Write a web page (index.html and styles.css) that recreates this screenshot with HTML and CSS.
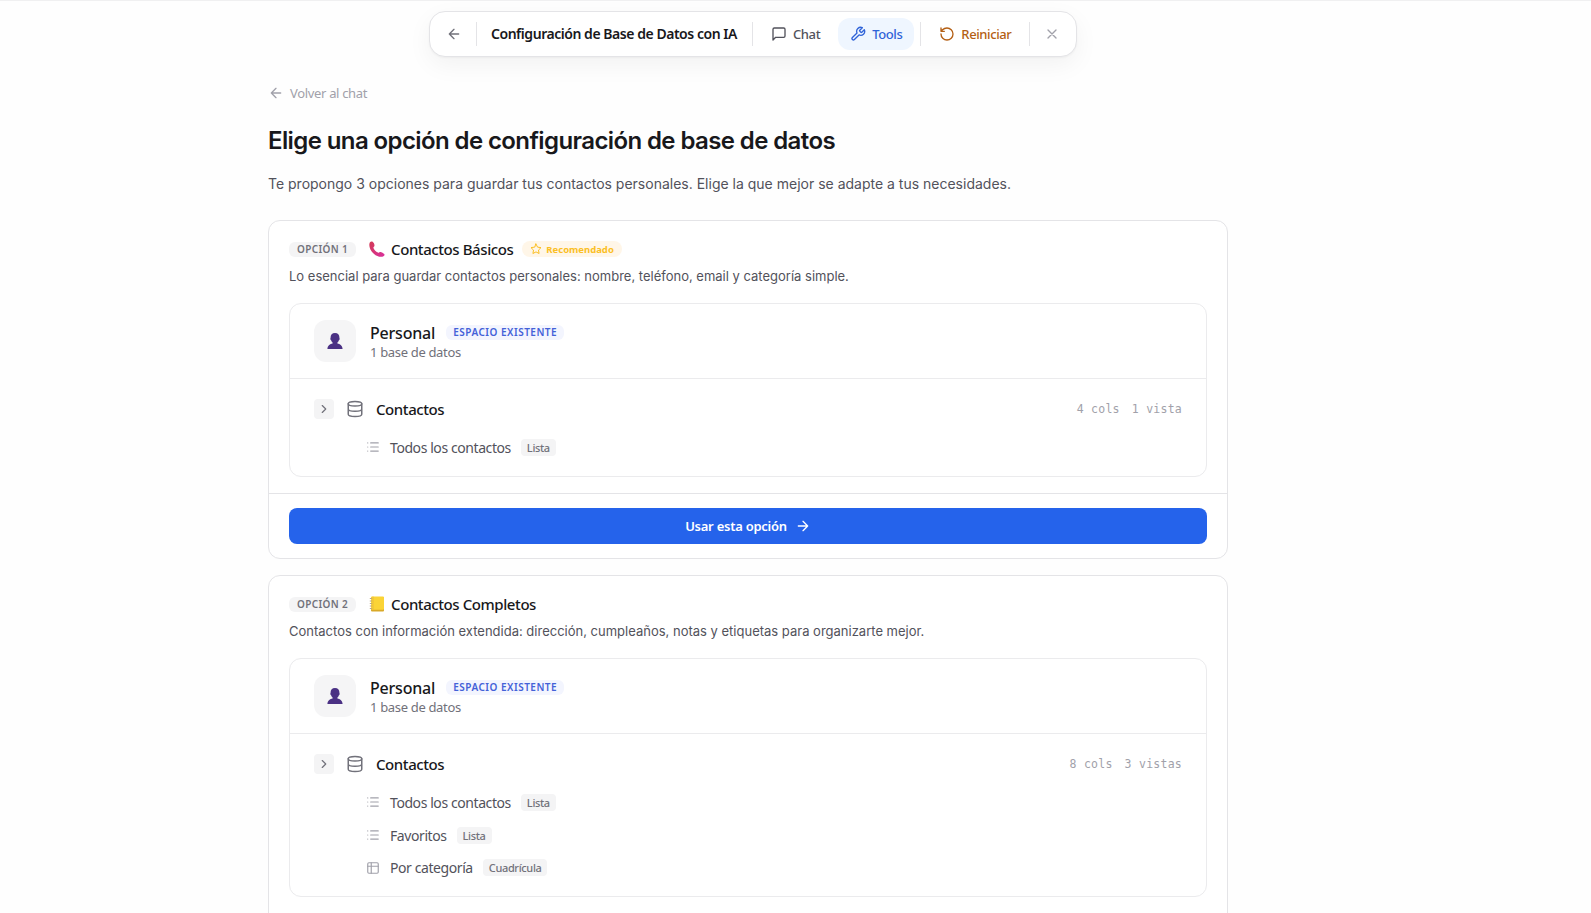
FILE: index.html
```html
<!DOCTYPE html>
<html lang="es">
    <head>
        <meta charset="utf-8">
        <title>Configuración de Base de Datos con IA</title>
        <link rel="stylesheet" href="styles.css">
    </head>
    <body>
        <!-- shared icons -->
        <svg class="sprite">
            <symbol id="arrow-left" viewBox="0 0 24 24"><path d="m12 19-7-7 7-7M19 12H5"/></symbol>
            <symbol id="arrow-right" viewBox="0 0 24 24"><path d="M5 12h14M12 5l7 7-7 7"/></symbol>
            <symbol id="chevron" viewBox="0 0 24 24"><path d="m9 18 6-6-6-6"/></symbol>
            <symbol id="database" viewBox="0 0 24 24"><ellipse cx="12" cy="5" rx="9" ry="3"/><path d="M3 5v14a9 3 0 0 0 18 0V5M3 12a9 3 0 0 0 18 0"/></symbol>
            <symbol id="list" viewBox="0 0 24 24"><path d="M8 5h13M8 12h13M8 19h13M3 5h.01M3 12h.01M3 19h.01"/></symbol>
            <symbol id="grid" viewBox="0 0 24 24"><rect x="3" y="3" width="18" height="18" rx="2"/><path d="M3 9h18M9 3v18"/></symbol>
            <symbol id="user" viewBox="0 0 16 16"><path d="M8 0c2.900 0 4.500 1.800 4.400 4.600 0 .7.4.8.2 1.700-.2.7-.6.8-.8 1.300-.3.9-.8 1.500-1.400 2v1c2.500.7 4.800 1.600 5.200 5.400H.4c.4-3.800 2.700-4.700 5.200-5.400v-1c-.6-.5-1.100-1.100-1.400-2-.2-.5-.6-.6-.8-1.300-.2-.9.2-1 .2-1.700C3.500 1.800 5.100 0 8 0z"/></symbol>
        </svg>

        <nav class="toolbar">
            <button class="icon-btn"><svg class="icon"><use href="#arrow-left"/></svg></button>
            <span class="divider"></span>
            <span class="toolbar-title">Configuración de Base de Datos con IA</span>
            <span class="divider"></span>
            <button class="tab">
                <svg class="icon" viewBox="0 0 24 24"><path d="M21 15a2 2 0 0 1-2 2H7l-4 4V5a2 2 0 0 1 2-2h14a2 2 0 0 1 2 2z"/></svg>
                <span>Chat</span>
            </button>
            <button class="tab active">
                <svg class="icon" viewBox="0 0 24 24"><path d="M14.700 6.300a1 1 0 0 0 0 1.400l1.600 1.600a1 1 0 0 0 1.400 0l3.770-3.770a6 6 0 0 1-7.940 7.940l-6.910 6.910a2.120 2.120 0 0 1-3-3l6.910-6.910a6 6 0 0 1 7.940-7.940l-3.760 3.760z"/></svg>
                <span>Tools</span>
            </button>
            <span class="divider"></span>
            <button class="tab reset">
                <svg class="icon" viewBox="0 0 24 24"><path d="M3 12a9 9 0 1 0 9-9 9.750 9.750 0 0 0-6.740 2.740L3 8M3 3v5h5"/></svg>
                <span>Reiniciar</span>
            </button>
            <span class="divider"></span>
            <button class="icon-btn close"><svg class="icon" viewBox="0 0 24 24"><path d="M18 6 6 18M6 6l12 12"/></svg></button>
        </nav>

        <main class="content">
            <a class="back"><svg class="icon"><use href="#arrow-left"/></svg><span>Volver al chat</span></a>
            <h1>Elige una opción de configuración de base de datos</h1>
            <p class="intro">Te propongo 3 opciones para guardar tus contactos personales. Elige la que mejor se adapte a tus necesidades.</p>

            <section class="option">
                <div class="option-body">
                    <div class="option-head">
                        <span class="option-num">OPCIÓN 1</span>
                        <svg class="emoji" viewBox="0 0 16 16">
                            <defs><linearGradient id="phone" x1="0" y1="0" x2="1" y2="1"><stop offset="0" stop-color="#d33a55"/><stop offset="1" stop-color="#d9309c"/></linearGradient></defs>
                            <path fill="url(#phone)" d="M.8 1.500C1.600.5 2.800.3 3.600.8c1 .8 1.900 2.300 1.900 3.600 0 1-1.200 1.400-1.100 2.300.2 1.500 2.600 4.200 4.500 4.900.9.3 1.500-.8 2.500-.7 1.300.2 3.100 1.100 3.900 2.200.6 1-.1 2-1.200 2.400-3 1-7.200-.3-10.100-3.400C1.100 9.200-.6 4.400.8 1.500z"/>
                        </svg>
                        <h2>Contactos Básicos</h2>
                        <span class="recommended">
                            <svg class="icon" viewBox="0 0 24 24"><path d="m12 2 3.090 6.260L22 9.270l-5 4.870 1.180 6.880L12 17.770l-6.180 3.250L7 14.140 2 9.270l6.910-1.010z"/></svg>
                            <span>Recomendado</span>
                        </span>
                    </div>
                    <p class="option-desc">Lo esencial para guardar contactos personales: nombre, teléfono, email y categoría simple.</p>
                    <div class="space">
                        <div class="space-head">
                            <span class="avatar"><svg><use href="#user"/></svg></span>
                            <div class="space-info">
                                <div class="space-name"><h3>Personal</h3><span class="existing">ESPACIO EXISTENTE</span></div>
                                <p>1 base de datos</p>
                            </div>
                        </div>
                        <div class="space-body">
                            <div class="db">
                                <button class="expand"><svg class="icon"><use href="#chevron"/></svg></button>
                                <svg class="icon db-icon"><use href="#database"/></svg>
                                <h4>Contactos</h4>
                                <div class="meta"><span>4 cols</span><span>1 vista</span></div>
                            </div>
                            <ul class="views">
                                <li><svg class="icon"><use href="#list"/></svg><span>Todos los contactos</span><span class="type">Lista</span></li>
                            </ul>
                        </div>
                    </div>
                </div>
                <div class="option-foot">
                    <button class="use-btn"><span>Usar esta opción</span><svg class="icon"><use href="#arrow-right"/></svg></button>
                </div>
            </section>

            <section class="option">
                <div class="option-body">
                    <div class="option-head">
                        <span class="option-num">OPCIÓN 2</span>
                        <svg class="emoji" viewBox="0 0 16 16">
                            <rect x="2" y="1" width="13" height="14.500" rx="1" fill="#d9a928"/>
                            <rect x="2" y=".5" width="13" height="13.200" rx="1" fill="#fbd436"/>
                            <path d="M4 .5v13" stroke="#e8b93a" stroke-width=".8"/>
                            <path d="M.8 2.500h2.400M.8 5h2.400M.8 7.500h2.400M.8 10h2.400M.8 12.500h2.400" stroke="#b9a17a" stroke-width=".9"/>
                        </svg>
                        <h2>Contactos Completos</h2>
                    </div>
                    <p class="option-desc">Contactos con información extendida: dirección, cumpleaños, notas y etiquetas para organizarte mejor.</p>
                    <div class="space">
                        <div class="space-head">
                            <span class="avatar"><svg><use href="#user"/></svg></span>
                            <div class="space-info">
                                <div class="space-name"><h3>Personal</h3><span class="existing">ESPACIO EXISTENTE</span></div>
                                <p>1 base de datos</p>
                            </div>
                        </div>
                        <div class="space-body">
                            <div class="db">
                                <button class="expand"><svg class="icon"><use href="#chevron"/></svg></button>
                                <svg class="icon db-icon"><use href="#database"/></svg>
                                <h4>Contactos</h4>
                                <div class="meta"><span>8 cols</span><span>3 vistas</span></div>
                            </div>
                            <ul class="views">
                                <li><svg class="icon"><use href="#list"/></svg><span>Todos los contactos</span><span class="type">Lista</span></li>
                                <li><svg class="icon"><use href="#list"/></svg><span>Favoritos</span><span class="type">Lista</span></li>
                                <li><svg class="icon"><use href="#grid"/></svg><span>Por categoría</span><span class="type">Cuadrícula</span></li>
                            </ul>
                        </div>
                    </div>
                </div>
            </section>
        </main>
    </body>
</html>
```

FILE: styles.css
```css
* {
    padding: 0;
    margin: 0;
    box-sizing: border-box;
}

body {
    height: 100vh;
    overflow: hidden;
    border-top: 1px solid #f0f0f1;
    background-color: #fefefe;
    font-family: "Segoe UI", "Noto Sans", sans-serif;
    color: #18181b;
}

button {
    border: none;
    background: none;
    font-family: inherit;
    cursor: pointer;
}

.sprite {
    display: none;
}

.icon {
    width: 16px;
    height: 16px;
    flex-shrink: 0;
    fill: none;
    stroke: currentColor;
    stroke-width: 2;
    stroke-linecap: round;
    stroke-linejoin: round;
}

/* toolbar */

.toolbar {
    display: flex;
    align-items: center;
    gap: 4px;
    width: 648px;
    height: 46px;
    margin: 10px 0 0 429px;
    padding: 0 7px 0 8px;
    border: 1px solid #e4e4e7;
    border-radius: 16px;
    background-color: #fff;
    box-shadow: 0 8px 24px rgba(0,0,0,0.05), 0 1px 2px rgba(0,0,0,0.04);
}

.divider {
    width: 1px;
    height: 24px;
    margin: 0 2px;
    background-color: #e4e4e7;
}

.icon-btn {
    display: flex;
    align-items: center;
    justify-content: center;
    width: 32px;
    height: 32px;
    color: #71717a;
}

.close {
    color: #a1a1aa;
}

.toolbar-title {
    width: 263px;
    padding: 0 8px 1px;
    font-size: 14px;
    font-weight: 600;
    letter-spacing: -0.46px;
    white-space: nowrap;
}

.tab {
    display: flex;
    align-items: center;
    gap: 6px;
    height: 32px;
    padding: 0 12px;
    border-radius: 12px;
    font-size: 13px;
    font-weight: 500;
    letter-spacing: -0.4px;
    color: #52525b;
}

.tab.active {
    margin-left: 2px;
    color: #2f63d8;
    background-color: #eff6ff;
}

.tab.reset {
    color: #b45f14;
}

/* page */

.content {
    width: 960px;
    margin: 26px 0 0 268px;
}

.back {
    display: flex;
    align-items: center;
    gap: 6px;
    height: 20px;
    font-size: 13px;
    letter-spacing: -0.33px;
    color: #a1a1aa;
}

h1 {
    margin-top: 20px;
    font-family: Inter, sans-serif;
    font-size: 24px;
    font-weight: 600;
    line-height: 36px;
    letter-spacing: -0.6px;
}

.intro {
    margin: 13px 0 25px;
    font-family: Inter, sans-serif;
    font-size: 14px;
    line-height: 23px;
    color: #52525b;
}

.option {
    margin-bottom: 16.25px;
    border: 1px solid #e4e4e7;
    border-radius: 12px;
    background-color: #fff;
}

.option:last-child {
    min-height: 400px;
}

.option-body {
    padding: 16px 20px;
}

.option-head {
    display: flex;
    align-items: center;
    height: 24px;
}

.option-num {
    height: 15px;
    padding: 0 8px;
    border-radius: 6px;
    background-color: #f4f4f5;
    font-size: 10px;
    font-weight: 600;
    line-height: 15px;
    letter-spacing: 0.35px;
    color: #71717a;
}

.emoji {
    width: 16px;
    height: 16px;
    margin: 0 6px 0 13px;
}

h2 {
    font-size: 15px;
    font-weight: 500;
    letter-spacing: -0.42px;
}

.recommended {
    display: flex;
    align-items: center;
    gap: 4px;
    height: 16px;
    margin-left: 9px;
    padding: 0 8px;
    border-radius: 8px;
    background-color: #fff6e8;
    font-size: 9.5px;
    font-weight: 700;
    color: #fbbf24;
}

.recommended .icon {
    width: 12px;
    height: 12px;
}

.option-desc {
    margin-top: 5px;
    font-family: Inter, sans-serif;
    font-size: 13px;
    line-height: 20px;
    color: #52525b;
}

.space {
    margin-top: 17px;
    border: 1px solid #ebebed;
    border-radius: 12px;
}

.space-head {
    display: flex;
    align-items: center;
    gap: 14px;
    height: 75px;
    padding: 0 24px;
    border-bottom: 1px solid #ebebed;
}

.avatar {
    display: flex;
    align-items: center;
    justify-content: center;
    width: 42px;
    height: 42px;
    border-radius: 12px;
    background-color: #f5f5f6;
}

.avatar svg {
    width: 16px;
    height: 16px;
    fill: #4b3184;
}

.space-info {
    padding-top: 2px;
}

.space-name {
    display: flex;
    align-items: center;
    gap: 11px;
    height: 20px;
}

h3 {
    padding-top: 2px;
    font-size: 16px;
    font-weight: 500;
    letter-spacing: -0.2px;
}

.existing {
    height: 15px;
    padding: 0 7px;
    border-radius: 6px;
    background-color: #f3f5fe;
    font-size: 10px;
    font-weight: 600;
    line-height: 15px;
    letter-spacing: 0.5px;
    color: #4361d8;
}

.space-info p {
    font-size: 13px;
    line-height: 20px;
    letter-spacing: -0.33px;
    color: #71717a;
}

.space-body {
    padding: 12px 24px;
}

.db {
    display: flex;
    align-items: center;
    height: 36px;
}

.expand {
    display: flex;
    align-items: center;
    justify-content: center;
    width: 20px;
    height: 20px;
    border-radius: 4px;
    background-color: #f4f4f5;
    color: #71717a;
}

.expand .icon {
    width: 14px;
    height: 14px;
}

.db-icon {
    width: 18px;
    height: 18px;
    margin: 0 12px;
    color: #71717a;
}

h4 {
    font-size: 15px;
    font-weight: 500;
    letter-spacing: -0.42px;
}

.meta {
    display: flex;
    gap: 12px;
    margin-left: auto;
    font-family: "DejaVu Sans Mono", monospace;
    font-size: 11.5px;
    letter-spacing: 0.25px;
    color: #a1a1aa;
}

.views {
    margin-top: 4px;
    padding-left: 52px;
    list-style: none;
}

.views li {
    display: flex;
    align-items: center;
    gap: 10px;
    height: 32.75px;
    font-size: 14px;
    letter-spacing: -0.42px;
    color: #52525b;
}

.views .icon {
    width: 14px;
    height: 14px;
    color: #a1a1aa;
}

.type {
    height: 17px;
    padding: 0 6px;
    border-radius: 4px;
    background-color: #f4f4f5;
    font-size: 11px;
    font-weight: 500;
    line-height: 17px;
    letter-spacing: -0.35px;
    color: #71717a;
}

.option-foot {
    padding: 14px 20px;
    border-top: 1px solid #e4e4e7;
}

.use-btn {
    display: flex;
    align-items: center;
    justify-content: center;
    gap: 8px;
    width: 100%;
    height: 36px;
    border-radius: 8px;
    background-color: #2563eb;
    font-size: 13px;
    font-weight: 600;
    letter-spacing: -0.25px;
    color: #fff;
}
```
